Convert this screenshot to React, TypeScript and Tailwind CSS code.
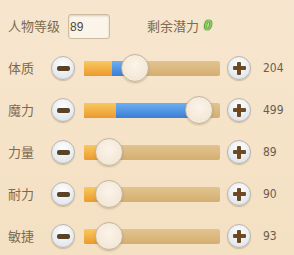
const stats = [
  { name: "体质", value: 204, orange: 28, blue: 48, knob: 51 },
  { name: "魔力", value: 499, orange: 32, blue: 115, knob: 115 },
  { name: "力量", value: 89, orange: 24, blue: 0, knob: 25 },
  { name: "耐力", value: 90, orange: 24, blue: 0, knob: 25 },
  { name: "敏捷", value: 93, orange: 24, blue: 0, knob: 25 },
];

function RoundButton({ plus }: { plus?: boolean }) {
  return (
    <div className="relative flex h-[24px] w-[24px] shrink-0 items-center justify-center rounded-full border border-[#b9b6b0] bg-[radial-gradient(circle_at_50%_35%,#ffffff,#e4e8ec_70%,#cfd3d8)] shadow-[0_1px_1px_rgba(120,90,50,0.3)]">
      {plus ? (
        <>
          <div className="absolute h-[4px] w-[13px] rounded-[1px] bg-[#6e4a24]" />
          <div className="absolute h-[13px] w-[4px] rounded-[1px] bg-[#6e4a24]" />
        </>
      ) : (
        <div className="h-[5px] w-[13px] rounded-[2px] bg-[#5a4226]" />
      )}
    </div>
  );
}

export default function App() {
  return (
    <div className="h-[255px] w-[294px] overflow-hidden bg-[linear-gradient(180deg,#f7e6cf,#f4e0c2)] px-[8px] font-['Noto_Sans_CJK_SC',sans-serif]">
      <div className="flex h-[47px] items-start pt-[14px]">
        <span className="w-[58px] pt-[4px] text-[13px] leading-[16px] text-[#7d6a50]">人物等级</span>
        <div className="ml-[2px] flex h-[25px] w-[42px] items-center rounded-[3px] border border-[#cdbba0] bg-[#fbf4e9] pl-[1px] font-['Liberation_Sans',sans-serif] text-[12px] text-[#4e4438] shadow-[inset_0_1px_2px_rgba(120,90,50,0.25)]">
          89
        </div>
        <span className="ml-[37px] pt-[4px] text-[13px] leading-[16px] text-[#7d6a50]">剩余潜力</span>
        <span className="ml-[5px] pt-[3px] font-['Liberation_Sans',sans-serif] text-[14px] font-bold italic leading-[17px] text-[#86d45a] [text-shadow:0_0_1px_#2f7a1f,0_0_1px_#2f7a1f,0_0_1px_#2f7a1f]">
          0
        </span>
      </div>
      {stats.map((s) => (
        <div key={s.name} className="flex h-[42px] items-center">
          <span className="w-[43px] text-[13px] text-[#7d6a50]">{s.name}</span>
          <RoundButton />
          <div className="relative ml-[9px] h-[15px] w-[136px] shrink-0 rounded-[2px] bg-[linear-gradient(180deg,#e2c48f,#d4ae72)]">
            {s.blue > 0 && (
              <div
                className="absolute left-0 top-0 h-full rounded-l-[2px] bg-[linear-gradient(180deg,#6db0f0,#3a7ed6)]"
                style={{ width: s.blue }}
              />
            )}
            <div
              className="absolute left-0 top-0 h-full rounded-l-[2px] bg-[linear-gradient(180deg,#f9c860,#eb9a2c)]"
              style={{ width: s.orange }}
            />
            <div
              className="absolute top-1/2 h-[28px] w-[28px] -translate-x-1/2 -translate-y-1/2 rounded-full border border-[#c2b5a2] bg-[radial-gradient(circle_at_50%_40%,#fbf4ea,#f3e7d5_75%,#e6d6bf)] shadow-[0_1px_2px_rgba(110,80,40,0.3)]"
              style={{ left: s.knob }}
            />
          </div>
          <div className="ml-[7px]">
            <RoundButton plus />
          </div>
          <span className="ml-[12px] font-['DejaVu_Sans_Condensed','Liberation_Sans',sans-serif] text-[12px] text-[#6a5e50]">{s.value}</span>
        </div>
      ))}
    </div>
  );
}
